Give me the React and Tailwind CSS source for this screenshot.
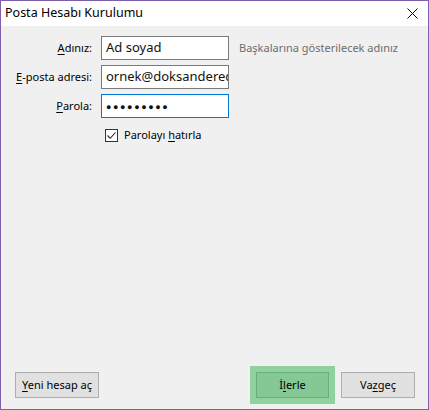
function Mn({ children }) {
  return <span className="underline underline-offset-2">{children}</span>;
}

function CloseIcon() {
  return (
    <svg width="11" height="11" viewBox="0 0 11 11" className="text-black">
      <path d="M0.5 0.5 L10.5 10.5 M10.5 0.5 L0.5 10.5" stroke="currentColor" strokeWidth="1" fill="none" />
    </svg>
  );
}

function CheckBox() {
  return (
    <div className="w-[13px] h-[13px] border border-[#333] bg-white flex items-center justify-center">
      <svg width="11" height="11" viewBox="0 0 11 11">
        <path d="M1.5 5.5 L4.2 8.3 L9.5 2.5" stroke="#222" strokeWidth="1.1" fill="none" />
      </svg>
    </div>
  );
}

function Field({ children, focused }) {
  return (
    <div
      className={`h-[24px] w-[128px] bg-white border flex items-center pl-[4px] overflow-hidden whitespace-nowrap text-[13px] text-[#111] ${
        focused ? "border-[#0078d7]" : "border-[#7a7a7a]"
      }`}
    >
      {children}
    </div>
  );
}

export default function App() {
  return (
    <div className="w-[429px] h-[410px] border border-[#7d5fac] bg-[#f0f0f0] flex flex-col text-[11px] text-black font-['Noto_Sans',sans-serif]">
      <div className="h-[25px] bg-white flex items-center justify-between pl-[4px] pr-[10px] shrink-0">
        <span className="text-[12.5px]">Posta Hesabı Kurulumu</span>
        <CloseIcon />
      </div>

      <div className="flex-1 flex flex-col pt-[10px]">
        <div className="grid grid-cols-[91px_128px_auto] gap-x-[9px] gap-y-[5px] items-center">
          <div className="text-right"><Mn>A</Mn>dınız:</div>
          <Field>Ad soyad</Field>
          <div className="pl-[1px] text-[#6d6d6d]">Başkalarına gösterilecek adınız</div>

          <div className="text-right"><Mn>E</Mn>-posta adresi:</div>
          <Field>ornek@doksanderece.com</Field>
          <div />

          <div className="text-right"><Mn>P</Mn>arola:</div>
          <Field focused>
            <span className="text-[9px] tracking-[1.6px] leading-none">●●●●●●●●●</span>
          </Field>
          <div />
        </div>

        <div className="flex items-center gap-[6px] pl-[104px] mt-[9px]">
          <CheckBox />
          <span>Parolayı <Mn>h</Mn>atırla</span>
        </div>

        <div className="flex-1" />

        <div className="flex items-center pl-[14px] pr-[13px] pb-[11px]">
          <button className="h-[26px] w-[84px] bg-[#e1e1e1] border border-[#adadad]">
            <Mn>Y</Mn>eni hesap aç
          </button>
          <div className="flex-1" />
          <button className="h-[26px] w-[73px] bg-[#86c796] border border-[#6bae7e] shadow-[0_0_0_6px_#8fd2a0]">
            İ<Mn>l</Mn>erle
          </button>
          <button className="h-[26px] w-[74px] ml-[12px] bg-[#e1e1e1] border border-[#adadad]">
            Va<Mn>z</Mn>geç
          </button>
        </div>
      </div>
    </div>
  );
}
